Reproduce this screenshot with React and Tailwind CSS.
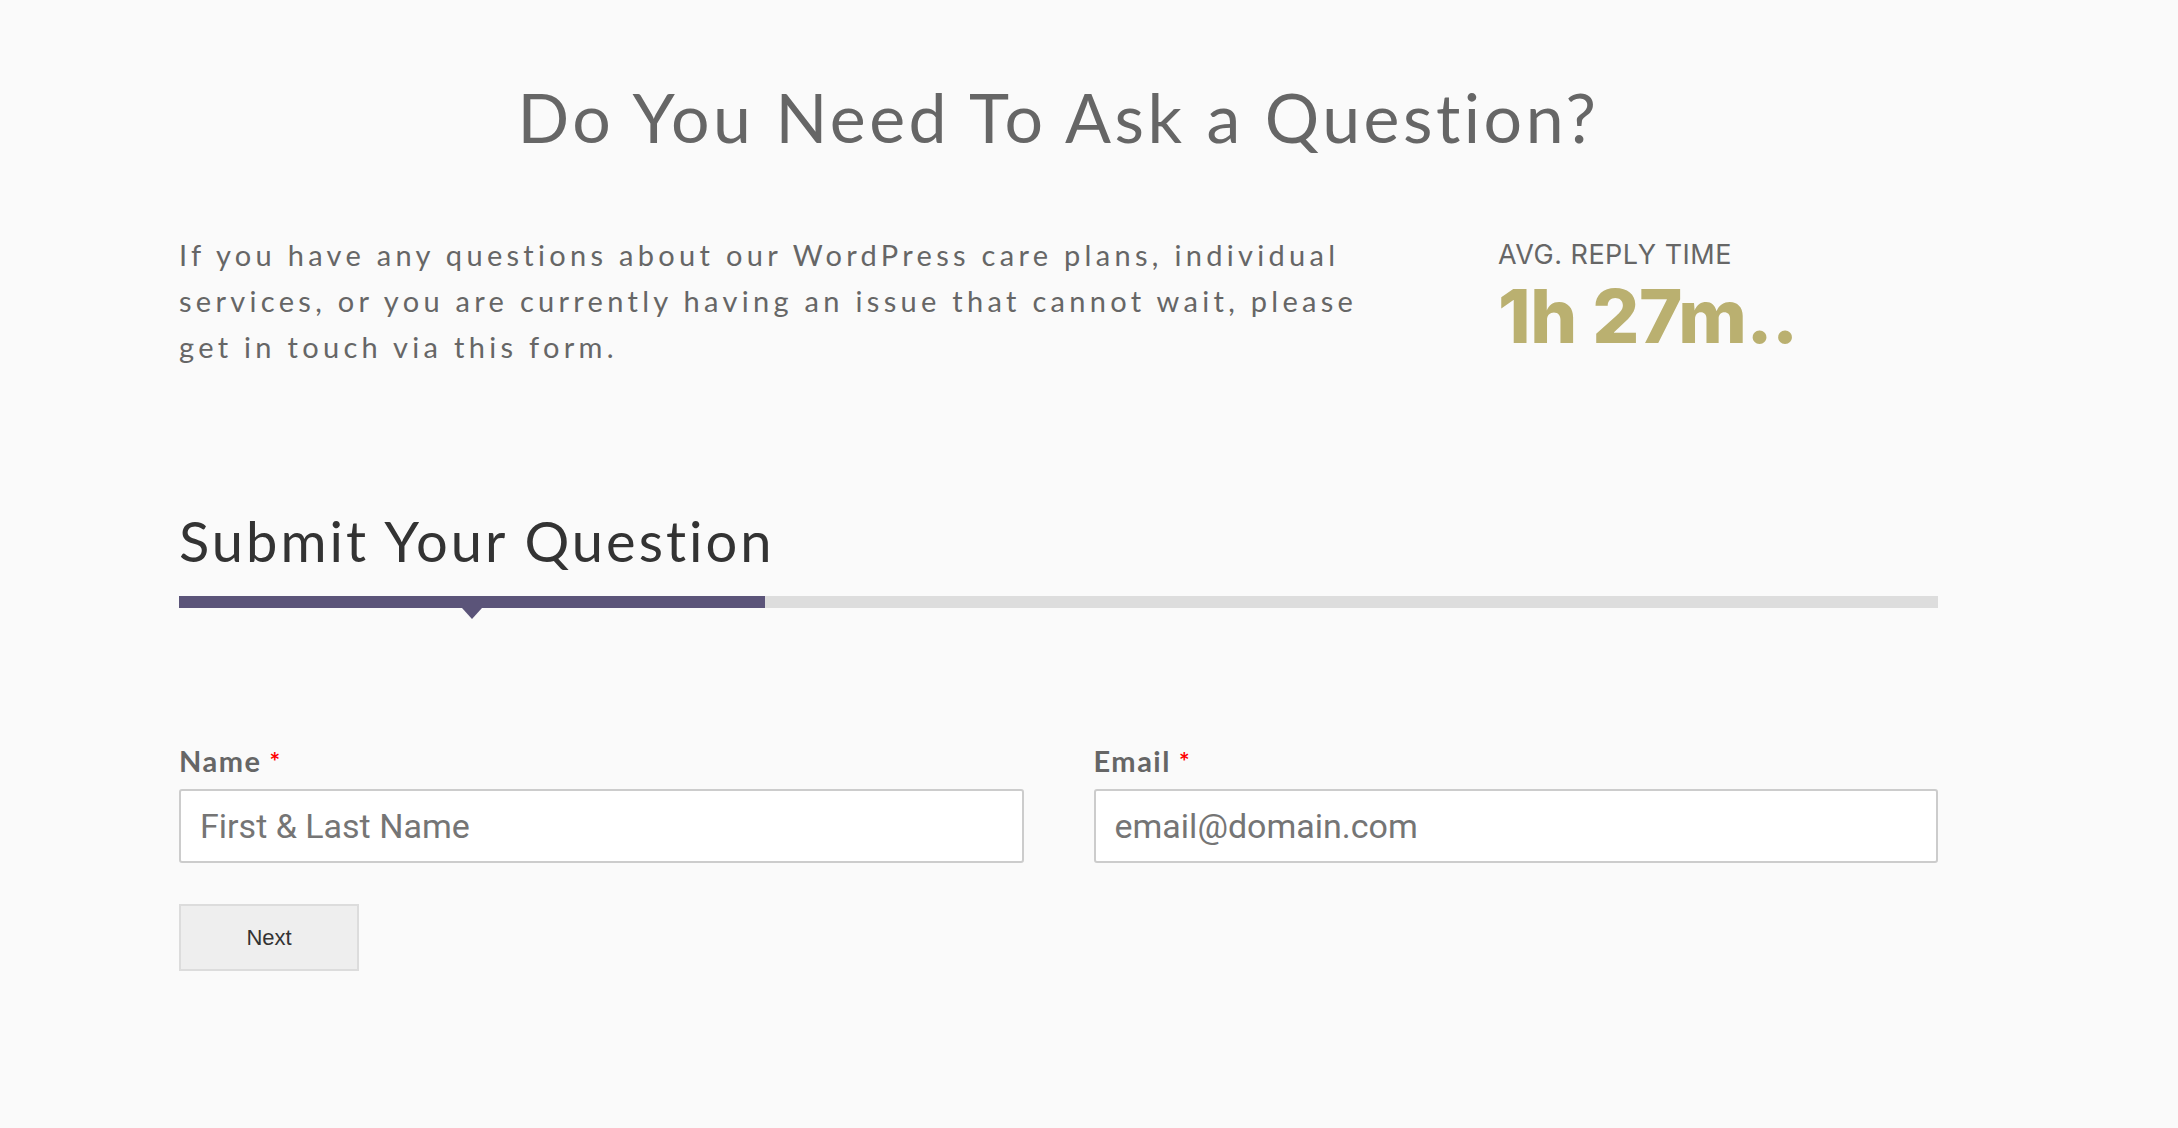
import React, { useState } from "react";

const lato = { fontFamily: "Lato, 'Open Sans', sans-serif" };
const inter = { fontFamily: "Inter, 'Noto Sans', sans-serif" };

const Field = ({ label, placeholder, value, onChange }) => (
  <div className="flex flex-1 flex-col">
    <label className="mb-[8px] text-[29px] font-bold leading-[40px] tracking-[1.5px] text-[#666666]" style={lato}>
      {label}
      <span className="ml-[8px] align-top text-[25px] text-[#ff0000]">*</span>
    </label>
    <input
      value={value}
      onChange={(e) => onChange(e.target.value)}
      placeholder={placeholder}
      className="h-[74px] w-full rounded-[3px] border-2 border-[#cccccc] bg-white px-[19px] text-[34px] text-[#555555] outline-none placeholder:text-[#757575]"
      style={{ fontFamily: "Roboto, 'Liberation Sans', sans-serif" }}
    />
  </div>
);

export default function App() {
  const [form, setForm] = useState({ name: "", email: "" });
  const onChange = (k, v) => setForm((s) => ({ ...s, [k]: v }));

  return (
    <div className="min-h-[1128px] w-full bg-[#fafafa]">
      <div className="ml-[179px] w-[1759px] pt-[72px]">
        <h1
          className="text-center text-[68px] font-normal leading-[90px] tracking-[3.5px] text-[#666666]"
          style={lato}
        >
          Do You Need To Ask a Question?
        </h1>

        <div className="mt-[70px] flex">
          <p
            className="w-[1215px] text-[29px] leading-[46px] tracking-[4.3px] text-[#666666]"
            style={lato}
          >
            If you have any questions about our WordPress care plans, individual services, or you are currently having an issue that cannot wait, please get in touch via this form.
          </p>
          <div className="ml-[104px] mt-[3px] flex flex-col">
            <span className="text-[27px] leading-[40px] tracking-[0.5px] text-[#666666]" style={inter}>
              AVG. REPLY TIME
            </span>
            <span
              className="-mt-[4px] text-[74px] font-extrabold leading-[90px] tracking-[-0.5px] text-[#bab070]"
              style={inter}
            >
              1h 27m..
            </span>
          </div>
        </div>

        <h2
          className="mt-[136px] text-[56px] font-normal leading-[70px] tracking-[3px] text-[#333333]"
          style={lato}
        >
          Submit Your Question
        </h2>

        <div className="mt-[20px] flex h-[12px] w-full bg-[#dddddd]">
          <div className="relative h-full w-[586px] bg-[#5b5479]">
            <span className="absolute left-[283px] top-full h-0 w-0 border-x-[10px] border-t-[11px] border-x-transparent border-t-[#5b5479]" />
          </div>
        </div>

        <div className="mt-[133px] flex gap-[70px]">
          <Field label="Name" placeholder="First & Last Name" value={form.name} onChange={(v) => onChange("name", v)} />
          <Field label="Email" placeholder="email@domain.com" value={form.email} onChange={(v) => onChange("email", v)} />
        </div>

        <button
          className="mt-[41px] h-[67px] w-[180px] border-2 border-[#dcdcdc] bg-[#eeeeee] text-[22px] text-[#333333]"
          style={{ fontFamily: "'Liberation Sans', Arial, sans-serif" }}
        >
          Next
        </button>
      </div>
    </div>
  );
}
